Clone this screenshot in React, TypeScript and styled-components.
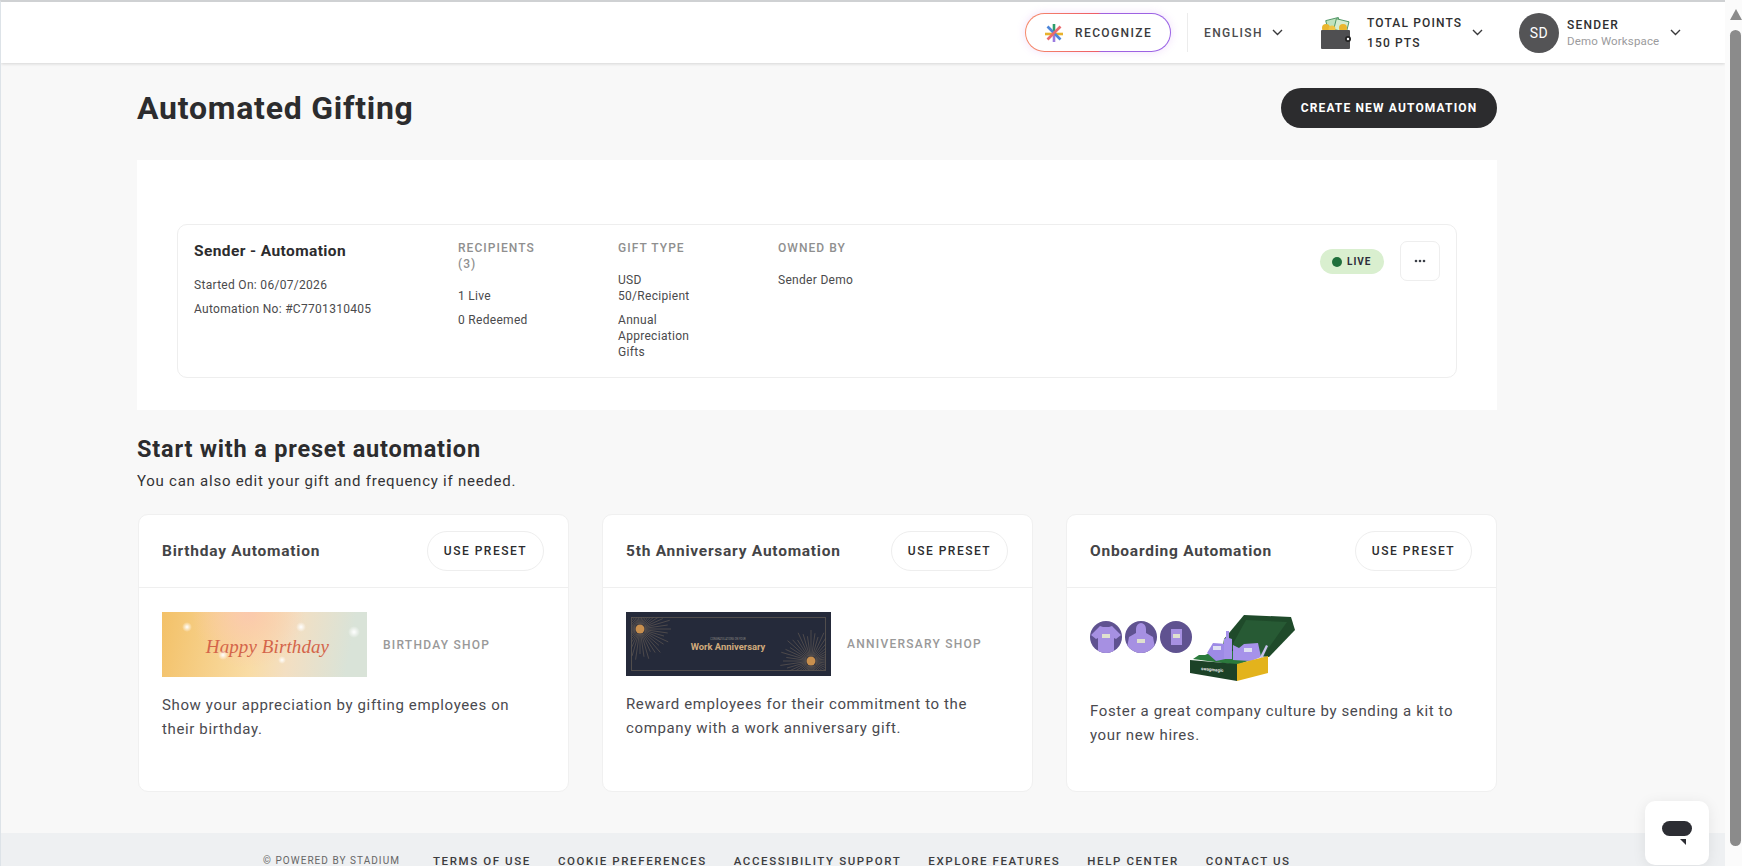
import React from "react";
import styled, { createGlobalStyle } from "styled-components";

const Global = createGlobalStyle`
  html, body {
    margin: 0;
    height: 100%;
    overflow: hidden;
  }
  body {
    font-family: Roboto, "Liberation Sans", sans-serif;
    color: #2c2c2e;
    background: #f8f8f8;
  }
  * {
    box-sizing: border-box;
  }
`;

const Shell = styled.div`
  position: relative;
  display: flex;
  width: 1742px;
  height: 866px;
  overflow: hidden;
`;

const Page = styled.div`
  flex: 1;
  min-width: 0;
  height: 100%;
  overflow: hidden;
  background: #f8f8f8;
  border-top: 2px solid #cfd1d3;
  border-left: 1px solid #dde3e8;
`;

const Scrollbar = styled.div`
  width: 17px;
  height: 100%;
  background: #fbfbfb;
  padding: 9px 1px 0 5px;
  display: flex;
  flex-direction: column;
  align-items: center;
  gap: 10px;
  .arrow {
    width: 0;
    height: 0;
    border-left: 6px solid transparent;
    border-right: 6px solid transparent;
    border-bottom: 11px solid #8b8b8b;
  }
  .thumb {
    width: 11px;
    height: 816px;
    border-radius: 6px;
    background: #8b8b8b;
  }
`;

const TopBar = styled.header`
  height: 61px;
  background: #fff;
  box-shadow: 0 1px 3px rgba(0, 0, 0, 0.14);
  display: flex;
  align-items: center;
  justify-content: flex-end;
  padding-right: 44px;
`;

const RecognizeButton = styled.button`
  width: 146px;
  height: 39px;
  border: 1.5px solid transparent;
  border-radius: 20px;
  background: linear-gradient(#fff, #fff) padding-box,
    linear-gradient(90deg, #f58b6b 0%, #ee5c66 50%, #a060e0 52%, #9a63e6 100%) border-box;
  box-shadow: 0 0 8px rgba(190, 110, 235, 0.22);
  display: flex;
  align-items: center;
  gap: 11px;
  padding: 0 0 0 18px;
  font-family: inherit;
  font-size: 12px;
  font-weight: 500;
  letter-spacing: 1.4px;
  color: #3b3b3d;
`;

const Divider = styled.span`
  width: 1px;
  height: 39px;
  background: #ececec;
  margin: 0 16px;
`;

const LanguageMenu = styled.div`
  width: 79px;
  display: flex;
  align-items: center;
  justify-content: space-between;
  font-size: 12px;
  font-weight: 500;
  letter-spacing: 1.4px;
  color: #4b4b4d;
  margin-right: 38px;
`;

const PointsMenu = styled.div`
  display: flex;
  align-items: center;
  margin-right: 36px;
`;

const PointsText = styled.div`
  margin-left: 16px;
  margin-right: 11px;
  width: 94px;
  white-space: nowrap;
  font-size: 12px;
  font-weight: 500;
  letter-spacing: 1.15px;
  color: #2f2f31;
  line-height: 20px;
`;

const Avatar = styled.div`
  width: 40px;
  height: 40px;
  border-radius: 50%;
  background: #545456;
  color: #fff;
  font-size: 14px;
  letter-spacing: 0.6px;
  display: flex;
  align-items: center;
  justify-content: center;
`;

const UserMenu = styled.div`
  display: flex;
  align-items: center;
`;

const UserText = styled.div`
  margin-left: 8px;
  margin-right: 9px;
  width: 94px;
  white-space: nowrap;
  .name {
    font-size: 12px;
    font-weight: 500;
    letter-spacing: 1.2px;
    line-height: 16px;
    color: #2f2f31;
  }
  .workspace {
    font-size: 11.5px;
    letter-spacing: 0.15px;
    line-height: 16px;
    color: #9b9b9d;
  }
`;

const Content = styled.main`
  padding: 25px 228px 0 136px;
`;

const TitleRow = styled.div`
  display: flex;
  align-items: center;
  justify-content: space-between;
  height: 40px;
`;

const PageTitle = styled.h1`
  margin: 0;
  font-size: 32px;
  font-weight: 700;
  letter-spacing: 0.75px;
  color: #2c2c2e;
`;

const CreateButton = styled.button`
  width: 216px;
  height: 40px;
  border: 0;
  border-radius: 20px;
  background: #2c2c2e;
  color: #fff;
  font-family: inherit;
  font-size: 12px;
  font-weight: 700;
  letter-spacing: 1.15px;
`;

const Panel = styled.section`
  margin-top: 32px;
  background: #fff;
  padding: 64px 40px 32px 40px;
`;

const AutomationCard = styled.article`
  height: 154px;
  border: 1px solid #eeeeee;
  border-radius: 10px;
  padding: 15px 16px 0 16px;
  display: grid;
  grid-template-columns: 264px 160px 160px 1fr auto;
  font-size: 12px;
  line-height: 16px;
  letter-spacing: 0.3px;
  color: #4a4a4c;
`;

const Summary = styled.div`
  h3 {
    margin: 1px 0 16px;
    font-size: 15.5px;
    line-height: 20px;
    font-weight: 700;
    letter-spacing: 0.4px;
    color: #2c2c2e;
  }
  p {
    margin: 0 0 8px;
  }
`;

const Column = styled.div`
  width: 86px;
  h4 {
    margin: 0 0 16px;
    font-size: 12px;
    line-height: 16px;
    font-weight: 500;
    letter-spacing: 1.05px;
    color: #8f8f8f;
  }
  p {
    margin: 0 0 8px;
  }
`;

const Actions = styled.div`
  display: flex;
  align-items: flex-start;
  gap: 16px;
  margin-top: 1px;
`;

const LivePill = styled.span`
  margin-top: 8px;
  width: 64px;
  height: 25px;
  border-radius: 13px;
  background: #d9efcf;
  display: flex;
  align-items: center;
  padding-left: 12px;
  gap: 5px;
  font-size: 10px;
  font-weight: 700;
  letter-spacing: 1px;
  color: #2c2c3a;
  &::before {
    content: "";
    width: 10px;
    height: 10px;
    border-radius: 50%;
    background: #20703c;
  }
`;

const MoreButton = styled.button`
  width: 40px;
  height: 40px;
  border: 1px solid #eeeeee;
  border-radius: 7px;
  background: #fff;
  display: flex;
  align-items: center;
  justify-content: center;
  padding: 0;
`;

const SectionTitle = styled.h2`
  margin: 24px 0 0;
  font-size: 23.5px;
  line-height: 30px;
  font-weight: 700;
  letter-spacing: 0.8px;
  color: #2c2c2e;
`;

const SectionSub = styled.p`
  margin: 6px 0 0;
  font-size: 15px;
  line-height: 22px;
  letter-spacing: 0.75px;
  color: #333335;
`;

const PresetGrid = styled.div`
  margin: 22px 0 0 1px;
  display: grid;
  grid-template-columns: repeat(3, 1fr);
  gap: 33px;
`;

const PresetCard = styled.article`
  height: 278px;
  background: #fff;
  border: 1px solid #f0f0f0;
  border-radius: 10px;
`;

const PresetHeader = styled.div`
  height: 73px;
  border-bottom: 1px solid #efefef;
  display: flex;
  align-items: center;
  justify-content: space-between;
  padding: 0 24px 0 23px;
  h3 {
    margin: 0;
    font-size: 15.5px;
    font-weight: 700;
    letter-spacing: 0.75px;
    color: #444446;
  }
`;

const PresetButton = styled.button`
  width: 117px;
  height: 40px;
  border: 1px solid #eeeeee;
  border-radius: 20px;
  background: #fff;
  font-family: inherit;
  font-size: 12px;
  font-weight: 500;
  letter-spacing: 1.5px;
  color: #2c2c2e;
`;

const PresetBody = styled.div`
  padding: 24px 30px 0 23px;
`;

const MediaRow = styled.div`
  display: flex;
  align-items: center;
  gap: 16px;
`;

const ShopLabel = styled.span`
  font-size: 12px;
  font-weight: 500;
  letter-spacing: 1.25px;
  color: #999999;
`;

const Description = styled.p`
  margin: 16px 0 0;
  font-size: 15px;
  line-height: 24px;
  letter-spacing: 0.63px;
  color: #4a4a4f;
`;

const BirthdayBanner = styled.div`
  position: relative;
  flex: none;
  width: 205px;
  height: 65px;
  overflow: hidden;
  background: radial-gradient(circle at 42% 0%, #fbc9ad 0%, rgba(251, 201, 173, 0) 42%),
    linear-gradient(100deg, #f3c168 0%, #f9dca5 45%, #f3dfc2 62%, #d9e3d8 90%);
  display: flex;
  align-items: center;
  justify-content: center;
  font-family: "Liberation Serif", serif;
  font-style: italic;
  font-size: 19px;
  color: #d4654a;
  padding: 5px 0 0 6px;
  letter-spacing: 0.1px;
  white-space: nowrap;
`;

const Spark = styled.i<{ $x: number; $y: number; $s: number }>`
  position: absolute;
  left: ${(p) => p.$x}px;
  top: ${(p) => p.$y}px;
  width: ${(p) => p.$s}px;
  height: ${(p) => p.$s}px;
  border-radius: 50%;
  background: radial-gradient(circle, #fff 0%, rgba(255, 255, 255, 0) 70%);
`;

const Kit = styled.div`
  height: 71px;
  display: flex;
  align-items: flex-start;
  svg {
    display: block;
  }
  > svg {
    margin-top: 3px;
  }
`;

const KitCircles = styled.div`
  display: flex;
  gap: 3px;
  margin-top: 9px;
  margin-right: -2px;
`;

const Foot = styled.footer`
  margin-top: 41px;
  height: 56px;
  background: #eef0f2;
  padding: 20px 0 0 262px;
  display: flex;
  align-items: flex-start;
  font-size: 11.5px;
  line-height: 16px;
  color: #3c3c3e;
  span {
    letter-spacing: 1.6px;
    margin-right: 27px;
    font-weight: 500;
    white-space: nowrap;
  }
  .copy {
    font-size: 10px;
    font-weight: 400;
    letter-spacing: 1.05px;
    margin-right: 33px;
    color: #666;
  }
`;

const ChatWidget = styled.button`
  position: absolute;
  left: 1645px;
  top: 801px;
  width: 64px;
  height: 64px;
  border: 0;
  border-radius: 10px;
  background: #fff;
  box-shadow: 0 2px 14px rgba(0, 0, 0, 0.08);
  padding: 0;
  display: flex;
  align-items: center;
  justify-content: center;
`;

const Chevron = () => (
  <svg width="11" height="7" viewBox="0 0 11 7" fill="none">
    <path d="M1 1l4.5 4.5L10 1" stroke="#3a3a3c" strokeWidth="1.4" />
  </svg>
);

const RecognizeIcon = () => (
  <svg width="20" height="20" viewBox="0 0 20 20" strokeWidth="2.6">
    <path d="M10 1v9" stroke="#2f9d6b" />
    <path d="M10 10v9" stroke="#9a7be0" />
    <path d="M1 11h18" stroke="#e8b22d" />
    <path d="M3.5 3.5l13 13" stroke="#4d86d9" />
    <path d="M16.5 3.5l-13 13" stroke="#ea6a6f" />
  </svg>
);

const WalletIcon = () => (
  <svg width="30" height="32" viewBox="0 0 30 32">
    <g transform="rotate(-14 12 8)">
      <rect x="6" y="2" width="13" height="12" fill="#bfe3bd" stroke="#3d8a55" strokeWidth="0.8" />
    </g>
    <g transform="rotate(14 20 8)">
      <rect x="14" y="3" width="13" height="11" fill="#d5ecd0" stroke="#3d8a55" strokeWidth="0.8" />
    </g>
    <circle cx="5" cy="11" r="4" fill="#eab62e" />
    <circle cx="11" cy="12" r="3.5" fill="#f0c445" />
    <circle cx="22" cy="11" r="4" fill="#eab62e" />
    <rect x="0" y="13" width="29" height="19" rx="1" fill="#4f4f51" />
    <rect x="24" y="19" width="6" height="6" rx="3" fill="#222" />
    <circle cx="27" cy="22" r="1.2" fill="#fff" />
  </svg>
);

const MoreIcon = () => (
  <svg width="12" height="4" viewBox="0 0 12 4" fill="#3c4048">
    <circle cx="2" cy="2" r="1.3" />
    <circle cx="6" cy="2" r="1.3" />
    <circle cx="10" cy="2" r="1.3" />
  </svg>
);

const rays = (cx: number, cy: number, inner: number, outer: number) =>
  Array.from({ length: 44 }, (_, i) => {
    const a = (i / 44) * Math.PI * 2;
    const o = outer - (i % 3) * 3;
    return (
      <line
        key={i}
        x1={cx + Math.cos(a) * inner}
        y1={cy + Math.sin(a) * inner}
        x2={cx + Math.cos(a) * o}
        y2={cy + Math.sin(a) * o}
        stroke="#8a7a66"
        strokeWidth="0.4"
      />
    );
  });

const AnniversaryBanner = () => (
  <svg width="205" height="64" viewBox="0 0 205 64" style={{ flex: "none" }}>
    <rect width="205" height="64" fill="#252a3a" />
    <clipPath id="frame">
      <rect x="5" y="5" width="195" height="54" />
    </clipPath>
    <g clipPath="url(#frame)">
      {rays(14, 17, 5, 31)}
      {rays(185, 49, 5, 31)}
    </g>
    <rect x="5.5" y="5.5" width="194" height="53" fill="none" stroke="#5d5652" strokeWidth="0.8" />
    <circle cx="14" cy="17" r="4.5" fill="#c88f4e" />
    <circle cx="185" cy="49" r="4.5" fill="#c88f4e" />
    <text x="102" y="28" textAnchor="middle" fontSize="2.6" fill="#8d8a86" fontFamily="Roboto, sans-serif">
      CONGRATULATIONS ON YOUR
    </text>
    <text x="102" y="38" textAnchor="middle" fontSize="9.4" fontWeight="700" fill="#d1aa7c" fontFamily="Roboto, sans-serif">
      Work Anniversary
    </text>
  </svg>
);

const ItemCircle = ({ id, children }: { id: string; children: React.ReactNode }) => (
  <svg width="32" height="32" viewBox="0 0 32 32">
    <clipPath id={id}>
      <circle cx="16" cy="16" r="16" />
    </clipPath>
    <g clipPath={`url(#${id})`}>
      <rect width="32" height="32" fill="#5f5290" />
      {children}
    </g>
  </svg>
);

const KitBox = () => (
  <svg width="106" height="67" viewBox="0 0 106 67">
    <path d="M54 0L101 2L105 15L79 42L32 38L34 24z" fill="#1f4a2a" />
    <path d="M56 5L97 7L75 38L40 34z" fill="#275a34" />
    <path d="M3 44l6-4 6 0 14-6 20 3 18-3 8 6-28 10z" fill="#2b7a3c" />
    <path d="M17 38l6-10 14 1 3 14-14 3z" fill="#9d8ae6" />
    <path d="M34 24l2-1v-7h3v7l3 1v20h-8z" fill="#a692ea" />
    <path d="M43 30l6 3 5-4 14-1 3 14-10 4-18-1z" fill="#a692ea" />
    <path d="M70 42l6-12 2 1-6 13z" fill="#c8c2ec" />
    <rect x="23" y="31" width="8" height="4" fill="#dfe0f2" />
    <rect x="54" y="33" width="8" height="4" fill="#dfe0f2" />
    <path d="M0 45l47 4v17L0 58z" fill="#1c4227" />
    <path d="M47 49l31-8v17l-31 8z" fill="#e3b31c" />
    <text x="11" y="55" fontSize="4.4" fontWeight="700" fill="#e9e9e9" fontFamily="Roboto, sans-serif" transform="rotate(5 11 55)">
      swagmagic
    </text>
  </svg>
);

const ChatIcon = () => (
  <svg width="30" height="25" viewBox="0 0 30 25">
    <rect width="30" height="15" rx="7.5" fill="#2c2d33" />
    <path d="M18 18h6v6z" fill="#2c2d33" />
  </svg>
);

export default function App() {
  return (
    <>
      <Global />
      <Shell>
        <Page>
          <TopBar>
            <RecognizeButton>
              <RecognizeIcon />
              RECOGNIZE
            </RecognizeButton>
            <Divider />
            <LanguageMenu>
              ENGLISH
              <Chevron />
            </LanguageMenu>
            <PointsMenu>
              <WalletIcon />
              <PointsText>
                TOTAL POINTS
                <br />
                150 PTS
              </PointsText>
              <Chevron />
            </PointsMenu>
            <UserMenu>
              <Avatar>SD</Avatar>
              <UserText>
                <div className="name">SENDER</div>
                <div className="workspace">Demo Workspace</div>
              </UserText>
              <Chevron />
            </UserMenu>
          </TopBar>
          <Content>
            <TitleRow>
              <PageTitle>Automated Gifting</PageTitle>
              <CreateButton>CREATE NEW AUTOMATION</CreateButton>
            </TitleRow>
            <Panel>
              <AutomationCard>
                <Summary>
                  <h3>Sender - Automation</h3>
                  <p>Started On: 06/07/2026</p>
                  <p>Automation No: #C7701310405</p>
                </Summary>
                <Column>
                  <h4>RECIPIENTS (3)</h4>
                  <p>1 Live</p>
                  <p>0 Redeemed</p>
                </Column>
                <Column>
                  <h4>GIFT TYPE</h4>
                  <p>USD 50/Recipient</p>
                  <p>Annual Appreciation Gifts</p>
                </Column>
                <Column>
                  <h4>OWNED BY</h4>
                  <p>Sender Demo</p>
                </Column>
                <Actions>
                  <LivePill>LIVE</LivePill>
                  <MoreButton>
                    <MoreIcon />
                  </MoreButton>
                </Actions>
              </AutomationCard>
            </Panel>
            <SectionTitle>Start with a preset automation</SectionTitle>
            <SectionSub>You can also edit your gift and frequency if needed.</SectionSub>
            <PresetGrid>
              <PresetCard>
                <PresetHeader>
                  <h3>Birthday Automation</h3>
                  <PresetButton>USE PRESET</PresetButton>
                </PresetHeader>
                <PresetBody>
                  <MediaRow>
                    <BirthdayBanner>
                      <Spark $x={20} $y={10} $s={10} />
                      <Spark $x={56} $y={38} $s={10} />
                      <Spark $x={134} $y={10} $s={10} />
                      <Spark $x={116} $y={44} $s={8} />
                      <Spark $x={186} $y={14} $s={12} />
                      Happy Birthday
                    </BirthdayBanner>
                    <ShopLabel>BIRTHDAY SHOP</ShopLabel>
                  </MediaRow>
                  <Description>Show your appreciation by gifting employees on their birthday.</Description>
                </PresetBody>
              </PresetCard>
              <PresetCard>
                <PresetHeader>
                  <h3>5th Anniversary Automation</h3>
                  <PresetButton>USE PRESET</PresetButton>
                </PresetHeader>
                <PresetBody>
                  <MediaRow>
                    <AnniversaryBanner />
                    <ShopLabel>ANNIVERSARY SHOP</ShopLabel>
                  </MediaRow>
                  <Description>Reward employees for their commitment to the company with a work anniversary gift.</Description>
                </PresetBody>
              </PresetCard>
              <PresetCard>
                <PresetHeader>
                  <h3>Onboarding Automation</h3>
                  <PresetButton>USE PRESET</PresetButton>
                </PresetHeader>
                <PresetBody>
                  <Kit>
                    <KitCircles>
                      <ItemCircle id="shirt">
                        <path d="M1 14l9-9 3 1h6l3-1 9 9-5 4-2-1v15h-16v-15l-2 1z" fill="#a690e2" />
                        <rect x="12" y="13" width="8" height="4" fill="#dfe0cf" />
                      </ItemCircle>
                      <ItemCircle id="hoodie">
                        <path d="M11 8a5 6 0 0 1 10 0v4l7 4 3 16h-30l3-16 7-4z" fill="#a690e2" />
                        <rect x="12" y="18" width="8" height="4" fill="#dfe0cf" />
                      </ItemCircle>
                      <ItemCircle id="notebook">
                        <rect x="11" y="8" width="11" height="16" fill="#a690e2" />
                        <rect x="13" y="13" width="7" height="4" fill="#dfe0cf" />
                      </ItemCircle>
                    </KitCircles>
                    <KitBox />
                  </Kit>
                  <Description>Foster a great company culture by sending a kit to your new hires.</Description>
                </PresetBody>
              </PresetCard>
            </PresetGrid>
          </Content>
          <Foot>
            <span className="copy">© POWERED BY STADIUM</span>
            <span>TERMS OF USE</span>
            <span>COOKIE PREFERENCES</span>
            <span>ACCESSIBILITY SUPPORT</span>
            <span>EXPLORE FEATURES</span>
            <span>HELP CENTER</span>
            <span>CONTACT US</span>
          </Foot>
        </Page>
        <Scrollbar>
          <div className="arrow" />
          <div className="thumb" />
        </Scrollbar>
        <ChatWidget>
          <ChatIcon />
        </ChatWidget>
      </Shell>
    </>
  );
}
